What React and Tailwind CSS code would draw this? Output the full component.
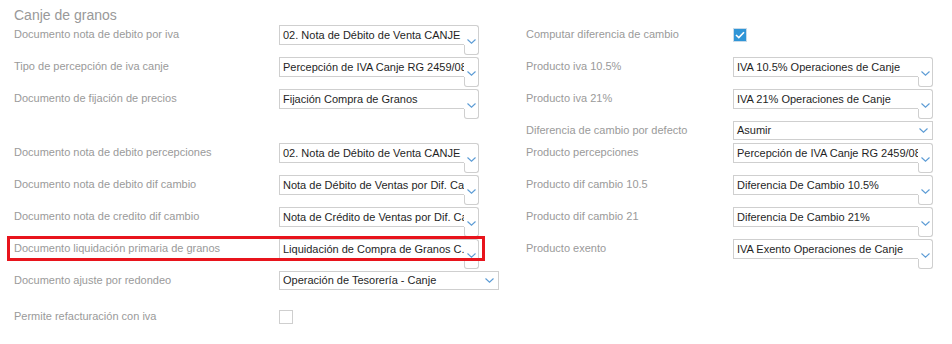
const font = { fontFamily: '"Liberation Sans", Arial, sans-serif' };

const Chevron = () => (
  <svg width="9" height="5" viewBox="0 0 9 5" className="block">
    <path d="M0.5 0.5 L4.5 4.2 L8.5 0.5" fill="none" stroke="#5b9bd5" strokeWidth="1.1" />
  </svg>
);

const Label = ({ children }) => (
  <div className="pt-[3px] text-[11px] leading-[13px] text-[#9a9a9a] whitespace-nowrap">{children}</div>
);

// select with a tall native box behind a single-line text box
const TallSelect = ({ value }) => (
  <div className="flex h-[30px] w-[200px]">
    <div className="h-[20px] w-[185px] overflow-hidden whitespace-nowrap border-y border-l border-[#cfcfcf] bg-white pl-[3px] text-[11px] leading-[18px] text-[#1f1f1f]">
      {value}
    </div>
    <div className="flex flex-1 flex-col">
      <div className="flex h-[20px] justify-center rounded-tr-[3px] border-r border-t border-[#cfcfcf] pl-[1px] pt-[13px]">
        <Chevron />
      </div>
      <div className="flex-1 rounded-b-[3px] border-x border-b border-[#cfcfcf]" />
    </div>
  </div>
);

const ShortSelect = ({ value, wide }) => (
  <div
    className={`flex h-[19px] items-center justify-between border border-[#cfcfcf] bg-white pl-[3px] pr-[4px] text-[11px] leading-[17px] text-[#1f1f1f] ${
      wide ? 'w-[220px]' : 'w-[200px]'
    }`}
  >
    <span className="whitespace-nowrap">{value}</span>
    <Chevron />
  </div>
);

const Checkbox = ({ checked }) =>
  checked ? (
    <div className="mt-[3px] flex h-[14px] w-[14px] items-center justify-center border border-[#c9dbe9] bg-[#2f95d7]">
      <svg width="10" height="8" viewBox="0 0 10 8">
        <path d="M1 4 L3.8 6.6 L9 1.2" fill="none" stroke="#fff" strokeWidth="1.6" />
      </svg>
    </div>
  ) : (
    <div className="mt-[3px] h-[14px] w-[14px] border border-[#cfcfcf] bg-white" />
  );

const rows = [
  ['Documento nota de debito por iva', <TallSelect value="02. Nota de Débito de Venta CANJE" />, 'Computar diferencia de cambio', <Checkbox checked />],
  ['Tipo de percepción de iva canje', <TallSelect value="Percepción de IVA Canje RG 2459/08" />, 'Producto iva 10.5%', <TallSelect value="IVA 10.5% Operaciones de Canje" />],
  ['Documento de fijación de precios', <TallSelect value="Fijación Compra de Granos" />, 'Producto iva 21%', <TallSelect value="IVA 21% Operaciones de Canje" />],
  ['', null, 'Diferencia de cambio por defecto', <ShortSelect value="Asumir" />],
  ['Documento nota de debito percepciones', <TallSelect value="02. Nota de Débito de Venta CANJE" />, 'Producto percepciones', <TallSelect value="Percepción de IVA Canje RG 2459/08" />],
  ['Documento nota de debito dif cambio', <TallSelect value="Nota de Débito de Ventas por Dif. Cambio" />, 'Producto dif cambio 10.5', <TallSelect value="Diferencia De Cambio 10.5%" />],
  ['Documento nota de credito dif cambio', <TallSelect value="Nota de Crédito de Ventas por Dif. Cambio" />, 'Producto dif cambio 21', <TallSelect value="Diferencia De Cambio 21%" />],
  ['Documento liquidación primaria de granos', <TallSelect value="Liquidación de Compra de Granos C.." />, 'Producto exento', <TallSelect value="IVA Exento Operaciones de Canje" />],
  ['Documento ajuste por redondeo', <ShortSelect value="Operación de Tesorería - Canje" wide />, '', null],
  ['Permite refacturación con iva', <Checkbox />, '', null],
];

export default function App() {
  return (
    <div className="relative h-[344px] w-[952px] bg-white pl-[14px] pt-[6px]" style={font}>
      <h1 className="h-[19px] text-[14px] leading-[19px] text-[#999]">Canje de granos</h1>
      <div className="grid grid-cols-[265px_247px_207px_200px] grid-rows-[32px_32px_32px_22px_32px_32px_32px_32px_36px_30px]">
        {rows.map(([l1, f1, l2, f2], i) => (
          <div key={i} className="contents">
            <Label>{l1}</Label>
            <div>{f1}</div>
            <Label>{l2}</Label>
            <div>{f2}</div>
          </div>
        ))}
      </div>
      <div className="pointer-events-none absolute left-[7px] top-[236px] h-[25px] w-[478px] border-[3px] border-[#e8141c]" />
    </div>
  );
}
